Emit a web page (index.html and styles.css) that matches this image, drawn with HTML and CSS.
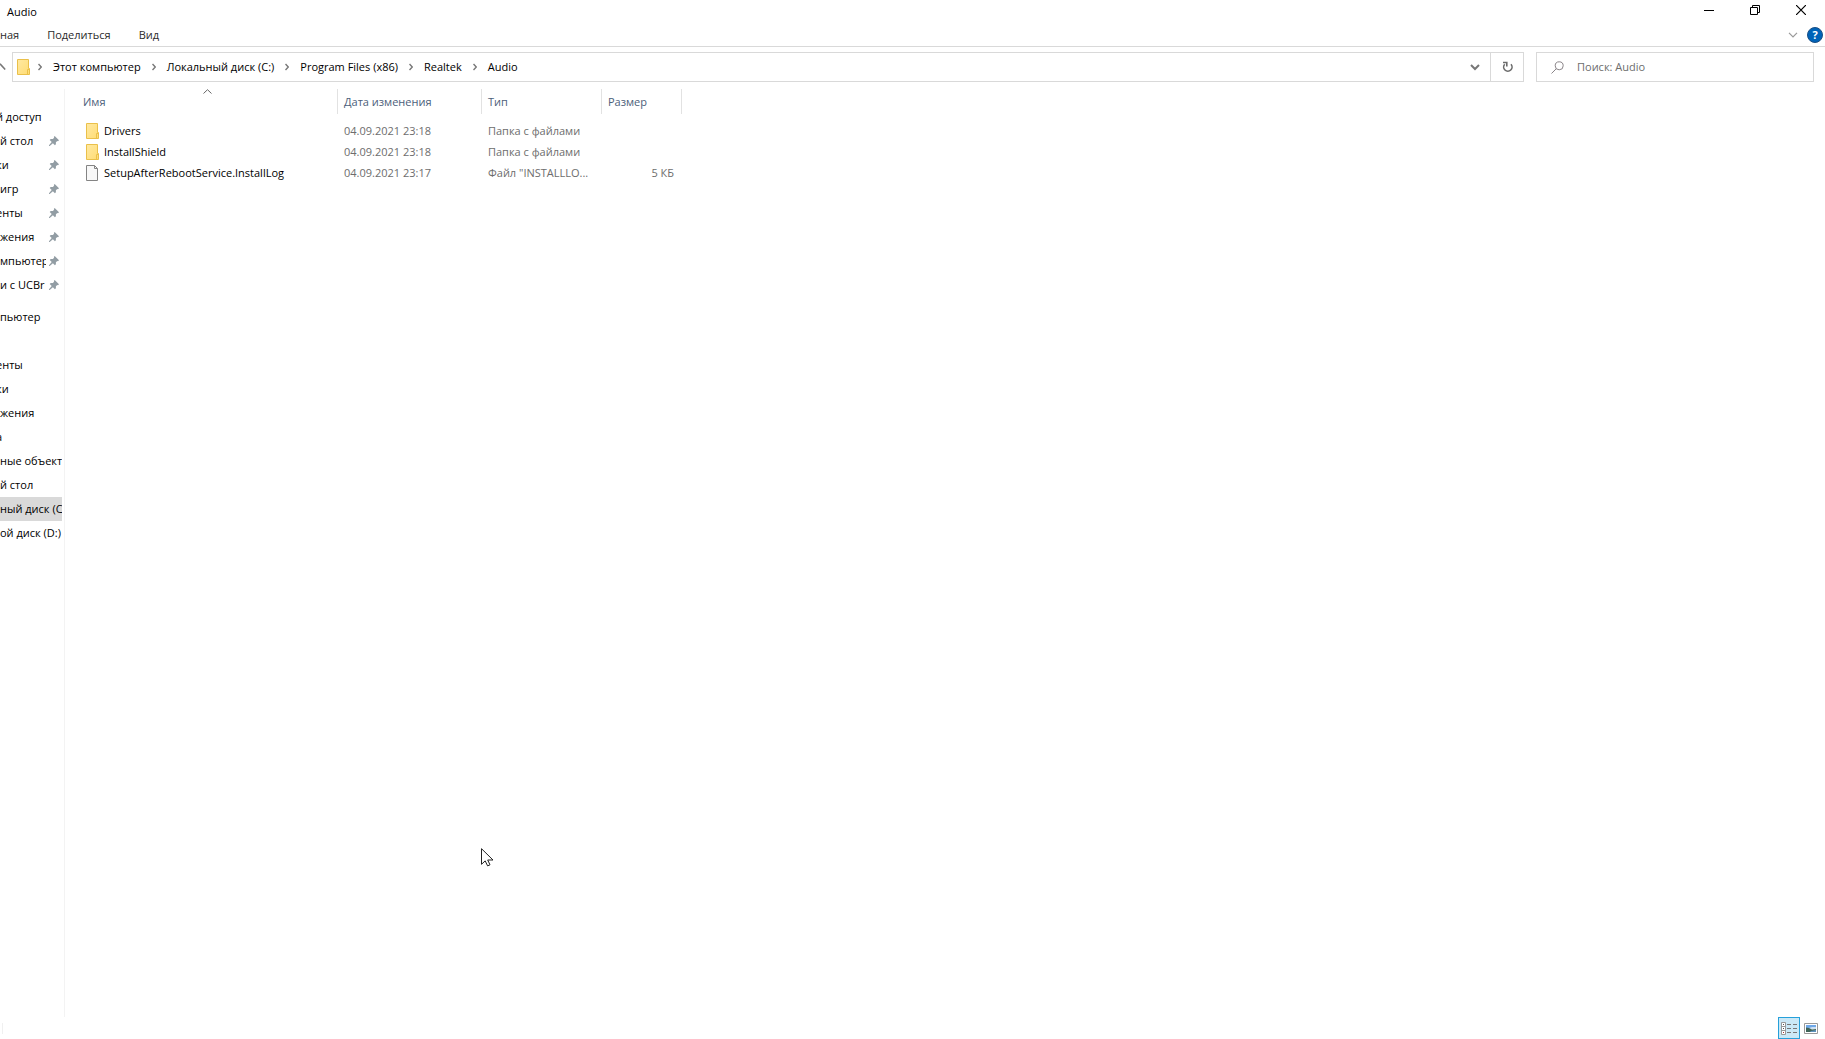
FILE: index.html
```html
<!DOCTYPE html>
<html lang="ru">
<head>
<meta charset="utf-8">
<title>Audio</title>
<link rel="stylesheet" href="styles.css">
</head>
<body>
<svg class="defs" width="0" height="0" aria-hidden="true">
  <defs>
    <linearGradient id="gold" x1="0" y1="0" x2="1" y2="1"><stop offset="0" stop-color="#ffe9a2"/><stop offset="1" stop-color="#ffdc73"/></linearGradient>
    <symbol id="folder" viewBox="0 0 13 16"><path d="M.5 .5H11.500V9.500H12.500V15.500H.5Z" fill="url(#gold)" stroke="#eac04a"/><path d="M10.500 15V10.500H12" fill="none" stroke="#eac04a"/></symbol>
    <symbol id="file" viewBox="0 0 13 16"><path d="M.5 .5H8.500L11.500 3.500V15.500H.5Z" fill="#f8f8f8" stroke="#848484"/><path d="M8.500 .5V3.500H11.500" fill="none" stroke="#848484"/></symbol>
    <symbol id="pin" viewBox="0 0 10 10"><path d="M5.700 0L10 4.200 9 5.200 8.300 4.900 6.900 6.300 6.900 8.300 5.900 9.300 3.900 7.300 .7 10 0 10 0 9.300 2.700 6.100 .7 4.100 1.700 3.100 3.800 3.100 5.200 1.700 4.800 1Z" fill="#929da4"/></symbol>
    <symbol id="sep" viewBox="0 0 4 8"><path d="M.5 1L3.300 4 .5 7" fill="none" stroke="#777" stroke-width="1.400"/></symbol>
  </defs>
</svg>
<div class="window">
  <header class="titlebar">
    <h1>Audio</h1>
    <div class="controls">
      <button aria-label="Свернуть"><svg width="10" height="10"><path d="M0 5.500H10" stroke="#000"/></svg></button>
      <button aria-label="Восстановить"><svg width="10" height="10" fill="none" stroke="#000"><path d="M.5 2.500H7.500V9.500H.5ZM2.500 2V.5H9.500V7.500H8"/></svg></button>
      <button aria-label="Закрыть"><svg width="10" height="10"><path d="M0 0L10 10M10 0L0 10" stroke="#000" stroke-width="1.200"/></svg></button>
    </div>
  </header>
  <nav class="ribbon">
    <button>ная</button>
    <button>Поделиться</button>
    <button>Вид</button>
    <div class="ribbon-end">
      <button aria-label="Развернуть ленту"><svg width="10" height="6"><path d="M1 .8L5 4.800 9 .8" fill="none" stroke="#999" stroke-width="1.200"/></svg></button>
      <button class="help" aria-label="Справка">?</button>
    </div>
  </nav>
  <div class="location">
    <button class="up" aria-label="Вверх"><svg width="12" height="8"><path d="M6 .8L11.200 6.500" fill="none" stroke="#777" stroke-width="1.600"/></svg></button>
    <div class="address">
      <svg width="13" height="16"><use href="#folder"/></svg>
      <nav class="crumbs">
        <svg width="4" height="8"><use href="#sep"/></svg><a href="#">Этот компьютер</a>
        <svg width="4" height="8"><use href="#sep"/></svg><a href="#">Локальный диск (C:)</a>
        <svg width="4" height="8"><use href="#sep"/></svg><a href="#">Program Files (x86)</a>
        <svg width="4" height="8"><use href="#sep"/></svg><a href="#">Realtek</a>
        <svg width="4" height="8"><use href="#sep"/></svg><a href="#">Audio</a>
      </nav>
      <button class="history" aria-label="Предыдущие расположения"><svg width="10" height="7"><path d="M1 1L5 5 9 1" fill="none" stroke="#777" stroke-width="2"/></svg></button>
      <button class="refresh" aria-label="Обновить"><svg width="12" height="12" fill="none" stroke="#6b6b6b" stroke-width="1.600"><path d="M2.700 3.200A4.200 4.200 0 1 0 9 3.200M1 1.500H4.800V5.500"/></svg></button>
    </div>
    <label class="search">
      <svg width="13" height="13" fill="none" stroke="#8a8488"><circle cx="8.200" cy="4.800" r="4"/><path d="M5.300 7.700L.5 12.500"/></svg>
      <input type="text" placeholder="Поиск: Audio" aria-label="Поиск: Audio">
    </label>
  </div>
  <div class="content">
    <aside class="tree">
      <ul>
        <li><a href="#" class="cut">й доступ</a></li>
        <li><a href="#">й стол</a><svg width="10" height="10"><use href="#pin"/></svg></li>
        <li><a href="#" class="cut">ки</a><svg width="10" height="10"><use href="#pin"/></svg></li>
        <li><a href="#">игр</a><svg width="10" height="10"><use href="#pin"/></svg></li>
        <li><a href="#" class="cut">енты</a><svg width="10" height="10"><use href="#pin"/></svg></li>
        <li><a href="#">жения</a><svg width="10" height="10"><use href="#pin"/></svg></li>
        <li><a href="#">мпьютер</a><svg width="10" height="10"><use href="#pin"/></svg></li>
        <li><a href="#">и с UCBr</a><svg width="10" height="10"><use href="#pin"/></svg></li>
      </ul>
      <ul>
        <li><a href="#">пьютер</a></li>
        <li></li>
        <li><a href="#" class="cut">енты</a></li>
        <li><a href="#" class="cut">ки</a></li>
        <li><a href="#">жения</a></li>
        <li><a href="#" class="cut">а</a></li>
        <li><a href="#">ные объекты</a></li>
        <li><a href="#">й стол</a></li>
        <li class="selected"><a href="#">ный диск (C</a></li>
        <li><a href="#">ой диск (D:)</a></li>
      </ul>
    </aside>
    <main class="files">
      <table>
        <colgroup><col class="c-name"><col class="c-date"><col class="c-type"><col class="c-size"></colgroup>
        <thead>
          <tr>
            <th>Имя<svg class="sort" width="9" height="5"><path d="M.5 4.500L4.500 .7 8.500 4.500" fill="none" stroke="#666"/></svg></th>
            <th>Дата изменения</th><th>Тип</th><th>Размер</th>
          </tr>
        </thead>
        <tbody>
          <tr><td><div class="name"><svg width="13" height="16"><use href="#folder"/></svg>Drivers</div></td><td>04.09.2021 23:18</td><td>Папка с файлами</td><td></td></tr>
          <tr><td><div class="name"><svg width="13" height="16"><use href="#folder"/></svg>InstallShield</div></td><td>04.09.2021 23:18</td><td>Папка с файлами</td><td></td></tr>
          <tr><td><div class="name"><svg width="13" height="16"><use href="#file"/></svg>SetupAfterRebootService.InstallLog</div></td><td>04.09.2021 23:17</td><td>Файл "INSTALLLO...</td><td>5 КБ</td></tr>
        </tbody>
      </table>
    </main>
  </div>
  <footer class="status">
    <span class="divider"></span>
    <button class="view active" aria-label="Таблица"><svg width="16" height="13"><path d="M.5 .5H4.500V12.500H.5ZM.5 4.500H4.500M.5 8.500H4.500" fill="#fff" stroke="#999"/><path d="M6 2.500H10M12 2.500H16M6 6.500H10M12 6.500H16M6 10.500H10M12 10.500H16" stroke="#777"/><path d="M2 2.500H3M2 6.500H3" stroke="#555"/><path d="M2 10.500H3" stroke="#a33"/></svg></button>
    <button class="view" aria-label="Крупные значки"><svg width="14" height="11"><path d="M.5 .5H13.500V10.500H.5Z" fill="#fff" stroke="#999"/><path d="M2 2H12V6H2Z" fill="#6fa8e8"/><path d="M5 5L8 4 12 4V6H5Z" fill="#cfe2f4"/><path d="M2 4.500L5 5 8 6.500 12 6V9H2Z" fill="#3f6458"/><path d="M7 8L12 7V9H6Z" fill="#5d92bd"/></svg></button>
  </footer>
</div>
<svg class="cursor" width="13" height="19"><path d="M.5 .7V16.300L4.200 12.900 6.600 17.900 9 16.800 6.700 12H12Z" fill="#fff" stroke="#222"/></svg>
</body>
</html>
```
FILE: styles.css
```css
* { box-sizing: border-box; }
body {
  margin: 0;
  background: #fff;
  color: #000;
  font: 11px/16px "Open Sans", "Noto Sans", sans-serif;
}
button { border: 0; padding: 0; background: none; color: inherit; font: inherit; display: flex; align-items: center; justify-content: center; }
a { color: inherit; text-decoration: none; }
svg { display: block; flex: none; }
.defs { position: absolute; }
.window { display: flex; flex-direction: column; min-height: 100vh; }

.titlebar { display: flex; justify-content: space-between; height: 24px; padding: 0 1px 0 7px; }
.titlebar h1 { margin: 0; font-size: 11px; font-weight: 400; line-height: 24px; }
.controls { display: flex; height: 20px; }
.controls button { width: 46px; }

.ribbon { display: flex; align-items: center; gap: 28px; height: 23px; border-bottom: 1px solid #d9d9d9; color: #2b2b2b; }
.ribbon-end { display: flex; align-items: center; gap: 9px; margin-left: auto; padding-right: 2px; }
.help { width: 16px; height: 16px; border-radius: 50%; background: #0063b8; border: 1px solid #1a4f85; color: #fff; font-weight: 700; line-height: 14px; }

.location { display: flex; height: 40px; padding: 5px 11px 5px 0; }
.up { width: 12px; overflow: hidden; justify-content: flex-end; padding-right: 6px; }
.address { display: flex; flex: 1; align-items: center; border: 1px solid #d9d9d9; padding-left: 4px; }
.crumbs { display: flex; align-items: center; gap: 11px; padding-left: 8px; }
.history { width: 30px; height: 28px; margin-left: auto; }
.refresh { width: 33px; height: 28px; padding-left: 2px; border-left: 1px solid #d9d9d9; }
.search { display: flex; align-items: center; gap: 13px; width: 278px; margin-left: 12px; padding-left: 14px; border: 1px solid #d9d9d9; }
.search input { flex: 1; min-width: 0; border: 0; padding: 0; background: none; font: inherit; outline: 0; }
.search input::placeholder { color: #6d6d6d; opacity: 1; }

.content { display: flex; flex: 1; padding-top: 2px; }
.tree { width: 65px; padding-top: 16px; border-right: 1px solid #f3f3f3; }
.tree ul { list-style: none; margin: 0 0 8px; padding: 0; }
.tree li { display: flex; align-items: center; width: 62px; height: 24px; overflow: hidden; white-space: nowrap; }
.tree a { flex: 1; min-width: 0; overflow: hidden; }
.tree .cut { margin-left: -4px; overflow: visible; }
.tree li svg { margin: 0 3px; }
.tree .selected { background: #d9d9d9; }

.files { flex: 1; padding-left: 11px; }
table { width: 606px; table-layout: fixed; border-collapse: separate; border-spacing: 0; }
.c-name { width: 262px; }
.c-date { width: 144px; }
.c-type { width: 120px; }
.c-size { width: 80px; }
th { position: relative; height: 25px; padding: 0 6px; border-right: 1px solid #e2e2e2; color: #4c607a; font-weight: 400; text-align: left; }
th:first-child { padding-left: 7px; }
.sort { position: absolute; top: 0; left: 50%; margin-left: -4px; }
tbody::before { content: ""; display: block; height: 6px; }
td { height: 21px; padding: 0 6px; color: #6d6d6d; white-space: nowrap; }
td:first-child { padding-left: 10px; color: #000; }
td:last-child { padding-right: 8px; text-align: right; }
.name { display: flex; align-items: center; gap: 5px; }

.status { display: flex; align-items: center; height: 22px; padding-right: 3px; }
.divider { width: 1px; height: 11px; margin: 0 auto 0 2px; background: #f0f0f0; }
.view { width: 22px; height: 22px; }
.view.active { border: 1px solid #26a0da; background: #cbe8f6; }
.cursor { position: absolute; left: 481px; top: 848px; }
```
